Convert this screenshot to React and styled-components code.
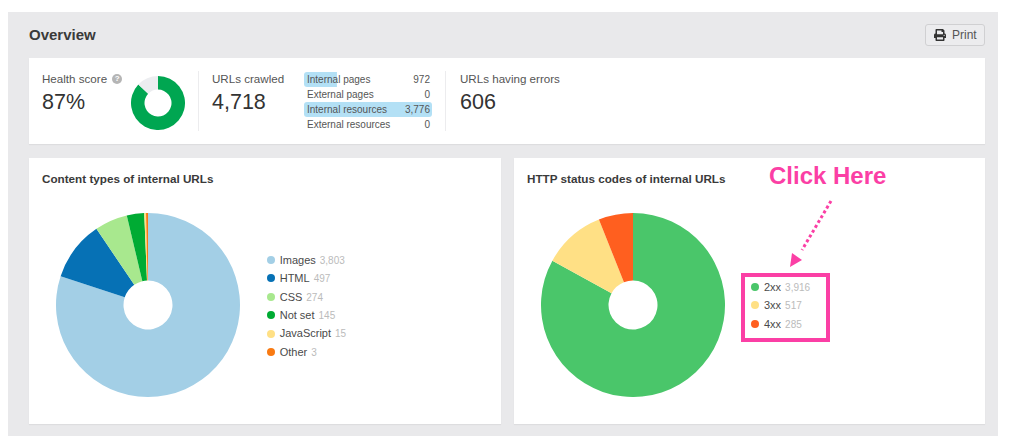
import React from "react";
import styled, { createGlobalStyle } from "styled-components";
import { FaPrint } from "react-icons/fa";

const Global = createGlobalStyle`
    html, body {
        margin: 0;
        background: #fff;
        font-family: "Liberation Sans", Arial, sans-serif;
        color: #333;
    }
`;

const Page = styled.div`
    width: 1009px;
    height: 446px;
    box-sizing: border-box;
    padding: 12px 11px 10px 8px;
    overflow: hidden;
`;

const Panel = styled.div`
    height: 424px;
    box-sizing: border-box;
    background: #e9e9eb;
    padding: 12px 13px 12px 21px;
`;

const Header = styled.div`
    display: flex;
    align-items: center;
    justify-content: space-between;
    height: 22px;
    margin-bottom: 12px;
`;

const Title = styled.h1`
    margin: -1px 0 0;
    font-size: 15px;
    font-weight: bold;
    color: #3a3a3a;
`;

const PrintButton = styled.button`
    display: flex;
    align-items: center;
    gap: 6px;
    width: 60px;
    height: 22px;
    padding: 0 0 0 8px;
    border: 1px solid #d0d0d2;
    border-radius: 3px;
    background: #ececee;
    font: 12px "Liberation Sans", Arial, sans-serif;
    color: #555;
`;

const Summary = styled.div`
    display: flex;
    height: 86px;
    box-sizing: border-box;
    padding: 13px 0 13px 13px;
    background: #fff;
    box-shadow: 0 1px 1px rgba(0, 0, 0, 0.05);
`;

const Stat = styled.div`
    display: flex;
    width: ${p => p.$width}px;
    box-sizing: border-box;
    padding-left: ${p => p.$left || 0}px;
    border-right: ${p => (p.$divider ? "1px solid #ececee" : "none")};
`;

const StatText = styled.div`
    width: ${p => p.$width}px;
    flex: none;
`;

const Label = styled.div`
    display: flex;
    align-items: center;
    gap: 5px;
    font-size: 11.6px;
    line-height: 16px;
    color: #555;
`;

const Value = styled.div`
    font-size: 21.5px;
    line-height: 26px;
    margin-top: 2px;
    color: #333;
`;

const Help = styled.span`
    display: inline-flex;
    align-items: center;
    justify-content: center;
    width: 10px;
    height: 10px;
    border-radius: 50%;
    background: #b5b5b5;
    color: #fff;
    font-size: 8px;
    font-weight: bold;
`;

const HealthRing = styled.div`
    margin-top: 5px;
`;

const Breakdown = styled.div`
    width: 128px;
    flex: none;
    margin-top: 1px;
`;

const BreakdownRow = styled.div`
    display: flex;
    justify-content: space-between;
    height: 15px;
    padding: 0 2px 0 3px;
    font-size: 10px;
    line-height: 15px;
    color: #555;
    border-radius: 3px;
    background: linear-gradient(#b3e0f5, #b3e0f5) no-repeat;
    background-size: ${p => p.$pct}% 100%;
`;

const Charts = styled.div`
    display: flex;
    gap: 13px;
    margin-top: 14px;
`;

const ChartCard = styled.div`
    position: relative;
    flex: none;
    width: ${p => p.$width}px;
    height: 266px;
    box-sizing: border-box;
    padding: 13px 13px 0;
    background: #fff;
    box-shadow: 0 1px 1px rgba(0, 0, 0, 0.05);
`;

const ChartTitle = styled.h2`
    margin: 0;
    font-size: 11.7px;
    line-height: 15px;
    font-weight: bold;
    color: #3a3a3a;
`;

const ChartBody = styled.div`
    display: flex;
    align-items: center;
    gap: ${p => p.$gap}px;
    margin: 27px 0 0 13.7px;
`;

const Legend = styled.div`
    display: flex;
    flex-direction: column;
    margin-top: 2px;
`;

const BoxedLegend = styled(Legend)`
    width: 89px;
    box-sizing: border-box;
    margin-top: 5px;
    padding: 1px 0 5px 6px;
    border: 4px solid #fb3fa5;
`;

const LegendRow = styled.div`
    display: flex;
    align-items: baseline;
    height: 18.4px;
    line-height: 18.4px;
    font-size: 11px;
    color: #4a4a4a;
`;

const Dot = styled.span`
    align-self: center;
    width: 8px;
    height: 8px;
    margin-right: 5px;
    border-radius: 50%;
    background: ${p => p.$color};
`;

const Count = styled.span`
    margin-left: 4px;
    font-size: 10px;
    color: #bbb;
`;

const Callout = styled.div`
    position: absolute;
    left: 255px;
    top: 4px;
    font-size: 24px;
    line-height: 28px;
    font-weight: bold;
    color: #fb3fa5;
    white-space: nowrap;
`;

const CalloutArrow = styled.svg`
    position: absolute;
    left: 270px;
    top: 38px;
`;

const polar = (cx, cy, r, a) => [cx + r * Math.sin(a), cy - r * Math.cos(a)];

// ring slices, clockwise from 12 o'clock
// arc overrides value where a tiny slice still has to show
const Ring = ({ size, inner, data }) => {
    const c = size / 2;
    const total = data.reduce((sum, d) => sum + (d.arc || d.value), 0);
    let angle = 0;
    return (
        <svg width={size} height={size} viewBox={`0 0 ${size} ${size}`} style={{ flex: "none", display: "block" }}>
            {data.map(d => {
                const start = angle;
                angle += ((d.arc || d.value) / total) * Math.PI * 2;
                const large = angle - start > Math.PI ? 1 : 0;
                const [x1, y1] = polar(c, c, c, start);
                const [x2, y2] = polar(c, c, c, angle);
                const [x3, y3] = polar(c, c, inner, angle);
                const [x4, y4] = polar(c, c, inner, start);
                return (
                    <path
                        key={d.label}
                        fill={d.color}
                        d={`M${x1} ${y1}A${c} ${c} 0 ${large} 1 ${x2} ${y2}L${x3} ${y3}A${inner} ${inner} 0 ${large} 0 ${x4} ${y4}Z`}
                    />
                );
            })}
        </svg>
    );
};

const contentTypes = [
    { label: "Images", value: 3803, color: "#a3cfe6" },
    { label: "HTML", value: 497, color: "#0671b5" },
    { label: "CSS", value: 274, color: "#a8e88e" },
    { label: "Not set", value: 145, color: "#00ab33" },
    { label: "JavaScript", value: 15, color: "#ffe085" },
    { label: "Other", value: 3, arc: 16, color: "#f97a12" },
];

const statusCodes = [
    { label: "2xx", value: 3916, color: "#4ac66a" },
    { label: "3xx", value: 517, color: "#ffe085" },
    { label: "4xx", value: 285, color: "#ff5f1f" },
];

const health = [
    { label: "ok", value: 87, color: "#00a651" },
    { label: "rest", value: 13, color: "#ecedf0" },
];

const crawled = [
    { label: "Internal pages", value: 972 },
    { label: "External pages", value: 0 },
    { label: "Internal resources", value: 3776 },
    { label: "External resources", value: 0 },
];

const Rows = ({ data }) =>
    data.map(d => (
        <LegendRow key={d.label}>
            <Dot $color={d.color} />
            {d.label}
            <Count>{d.value.toLocaleString("en-US")}</Count>
        </LegendRow>
    ));

const App = () => {
    return (
        <Page>
            <Global />
            <Panel>
                <Header>
                    <Title>Overview</Title>
                    <PrintButton>
                        <FaPrint size={12} color="#333" />
                        Print
                    </PrintButton>
                </Header>
                <Summary>
                    <Stat $width={157} $divider>
                        <StatText $width={89}>
                            <Label>
                                Health score <Help>?</Help>
                            </Label>
                            <Value>87%</Value>
                        </StatText>
                        <HealthRing>
                            <Ring size={54} inner={13.5} data={health} />
                        </HealthRing>
                    </Stat>
                    <Stat $width={247} $left={13} $divider>
                        <StatText $width={92}>
                            <Label>URLs crawled</Label>
                            <Value>4,718</Value>
                        </StatText>
                        <Breakdown>
                            {crawled.map(row => (
                                <BreakdownRow key={row.label} $pct={(row.value / 3776) * 100}>
                                    <span>{row.label}</span>
                                    <span>{row.value.toLocaleString("en-US")}</span>
                                </BreakdownRow>
                            ))}
                        </Breakdown>
                    </Stat>
                    <Stat $width={200} $left={14}>
                        <StatText $width={180}>
                            <Label>URLs having errors</Label>
                            <Value>606</Value>
                        </StatText>
                    </Stat>
                </Summary>
                <Charts>
                    <ChartCard $width={472}>
                        <ChartTitle>Content types of internal URLs</ChartTitle>
                        <ChartBody $gap={27}>
                            <Ring size={184} inner={24.5} data={contentTypes} />
                            <Legend>
                                <Rows data={contentTypes} />
                            </Legend>
                        </ChartBody>
                    </ChartCard>
                    <ChartCard $width={471}>
                        <ChartTitle>HTTP status codes of internal URLs</ChartTitle>
                        <ChartBody $gap={16.3}>
                            <Ring size={184} inner={24.5} data={statusCodes} />
                            <BoxedLegend>
                                <Rows data={statusCodes} />
                            </BoxedLegend>
                        </ChartBody>
                        <Callout>Click Here</Callout>
                        <CalloutArrow width="50" height="75" viewBox="0 0 50 75">
                            <line x1="47" y1="5" x2="18" y2="54" stroke="#fb3fa5" strokeWidth="3" strokeDasharray="3 2.6" />
                            <polygon points="6,71 8,57 18,64" fill="#fb3fa5" />
                        </CalloutArrow>
                    </ChartCard>
                </Charts>
            </Panel>
        </Page>
    );
};

export default App;
